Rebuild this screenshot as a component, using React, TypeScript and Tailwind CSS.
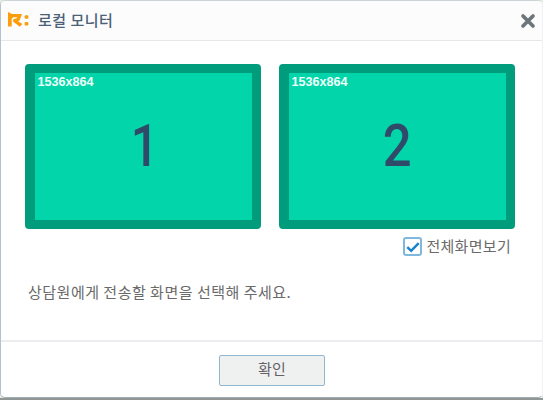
import React from "react";

function Logo() {
  return (
    <svg className="block h-[15px] w-[21px] shrink-0 translate-y-[-1px]" viewBox="0 0 21 15">
      <path
        d="M0 0L4 1.9H14L11.7 8.3L10.1 9.2L14.4 12L11.9 14.8L5.2 9.8V7.2L8.7 6.3L9.3 5.2H5.4L3.7 6.8V14.6H0Z"
        fill="#fb9d0c"
      />
      <rect x="16.6" y="3.2" width="3.8" height="3.6" rx="1" fill="#fb9d0c" />
      <rect x="16.6" y="10" width="3.8" height="3.6" rx="1" fill="#fb9d0c" />
    </svg>
  );
}

function Monitor({ id, resolution }: { id: number; resolution: string }) {
  return (
    <button className="relative flex h-[165px] w-[236px] shrink-0 items-center justify-center rounded-[4px] border-y-[9px] border-l-[10px] border-r-[9px] border-[#009c7c] bg-[#03d5ab]">
      <span className="absolute left-[2.5px] top-[2px] font-['Liberation_Sans',Arial,sans-serif] text-[12.6px] font-bold leading-[14px] text-[#effff9]">
        {resolution}
      </span>
      <span className={`block translate-y-[-1px] font-['Roboto',sans-serif] text-[59px] font-medium leading-[59px] text-[#2f4b69] ${id === 1 ? "translate-x-[1px] scale-x-[0.83]" : "translate-x-[-0.5px] scale-x-[0.86]"}`}>
        {id}
      </span>
    </button>
  );
}

export default function App() {
  return (
    <div className="h-[400px] w-[543px] overflow-hidden bg-[#909694] font-['Noto_Sans_CJK_KR',sans-serif]">
      <div className="h-[398px] bg-[#e9ebe3]">
        <div className="flex h-[398px] flex-col overflow-hidden rounded-[5px] border border-b-[#9eaeb4] border-l-[#b3c2cc] border-r-[#f1f2f4] border-t-[#cbd5d8] bg-white">
          <header className="flex h-[40px] shrink-0 items-center border-b border-[#e5e7e9] bg-[#fcfcfd] pl-[7px] pr-[6px]">
            <Logo />
            <h1 className="ml-[9px] flex-1 translate-y-[-1px] whitespace-nowrap text-[15px] font-medium leading-[20px] tracking-[0.5px] text-[#4b5f76]">
              로컬 모니터
            </h1>
            <button aria-label="닫기">
              <svg className="block h-[16px] w-[16px]" viewBox="0 0 16 16">
                <path d="M3 3L13 13M13 3L3 13" stroke="#6c7579" strokeWidth="3.7" strokeLinecap="round" />
              </svg>
            </button>
          </header>
          <main className="flex flex-1 flex-col pl-[24px] pr-[27px] pt-[23px]">
            <div className="flex gap-[18px]">
              <Monitor id={1} resolution="1536x864" />
              <Monitor id={2} resolution="1536x864" />
            </div>
            <label className="mt-[8px] flex h-[19px] items-center justify-end gap-[4px] pr-[4px]">
              <span className="flex h-[19px] w-[19px] items-center justify-center rounded-[3px] border-2 border-[#80b7df] bg-white">
                <svg className="block h-[14px] w-[14px]" viewBox="0 0 13 13" fill="none">
                  <path d="M1.2 6.6L4.8 10.1L11.8 3" stroke="#1782cc" strokeWidth="2.3" />
                </svg>
              </span>
              <span className="translate-y-[-1px] whitespace-nowrap text-[15px] leading-[20px] tracking-[0.3px] text-[#6a6a6a]">전체화면보기</span>
            </label>
            <p className="ml-[3px] mt-[26px] whitespace-nowrap text-[15px] leading-[20px] tracking-[0.5px] text-[#6a6a6a]">
              상담원에게 전송할 화면을 선택해 주세요.
            </p>
          </main>
          <footer className="flex h-[57px] shrink-0 justify-center border-t-2 border-[#ebebf0] pt-[13px]">
            <button className="h-[31px] w-[106px] rounded-[2px] border border-[#8fb7d2] bg-[#eff1f1] text-[15px] leading-[25px] text-[#666168]">
              <span className="block translate-x-[0.5px] translate-y-[-2px] tracking-[0.3px]">확인</span>
            </button>
          </footer>
        </div>
      </div>
    </div>
  );
}
